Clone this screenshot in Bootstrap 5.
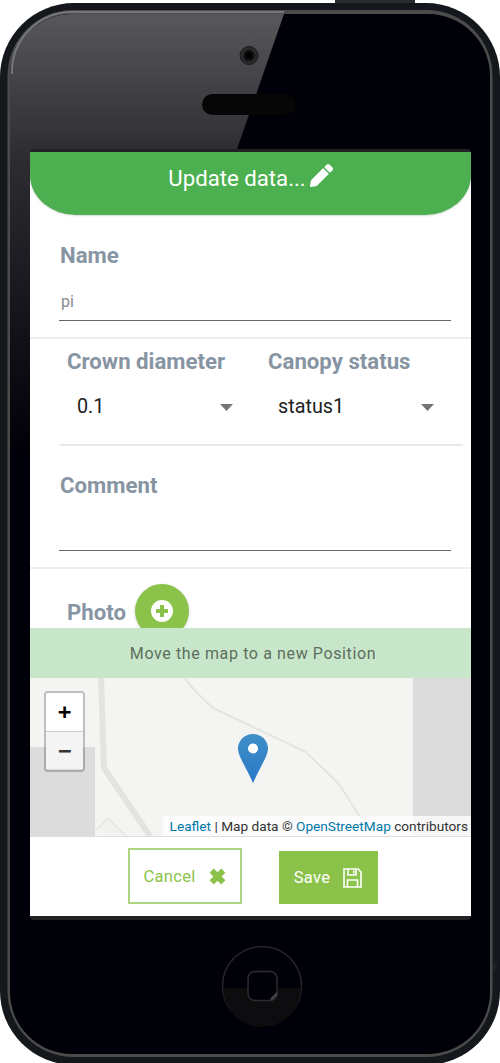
<!DOCTYPE html>
<html lang="en">
<head>
<meta charset="utf-8">
<title>Update data</title>
<link rel="stylesheet" href="https://cdn.jsdelivr.net/npm/bootstrap@5.3.0/dist/css/bootstrap.min.css">
<style>
html,body{margin:0;background:#fff;}
body{font-family:Roboto,"Liberation Sans",sans-serif;}
.phone-wrap{position:relative;width:500px;height:1063px;overflow:hidden;padding:152px 29px 0 30px;}
.phone-art{position:absolute;left:0;top:0;}
.screen-box{position:relative;width:441px;height:764px;background:#fff;display:flex;flex-direction:column;overflow:hidden;}
.head-bar{height:63px;background:#4caf50;color:#fff;border-radius:0 0 46px 46px/0 0 40px 40px;font-size:22.2px;line-height:53px;box-shadow:0 1px 2px rgba(0,0,0,.15);flex:none;}
.head-bar svg{width:23px;height:23px;margin-left:4px;vertical-align:-1px;margin-top:-6px;}
.fld-label{font-size:22.2px;font-weight:700;color:#8795a3;line-height:26px;margin:0;}
.sect-name{height:124px;padding:27px 20px 0 29px;border-bottom:2px solid #eee;flex:none;}
.sect-name .fld-label{margin-left:1px;}
.line-input.form-control{border:0;border-bottom:1px solid #666;border-radius:0;padding:0 2px;height:39px;font-size:16px;color:#8a8a8a;background:transparent;box-shadow:none;margin-top:14px;width:392px;font-family:inherit;}
.sect-sel{height:105px;flex:none;padding:9px 8px 0 37px;}
.sect-sel .row{--bs-gutter-x:0;width:396px;}
.sect-sel .col-6:first-child{width:201px;flex:none;}
.sect-sel .col-6:last-child{width:195px;flex:none;}
.pick.form-select{border:0;border-radius:0;background-color:transparent;background-position:right 4px center;background-size:13px 7px;background-image:url("data:image/svg+xml,%3Csvg xmlns='http://www.w3.org/2000/svg' viewBox='0 0 13 7'%3E%3Cpath fill='%23757575' d='M0 0h13L6.500 7z'/%3E%3C/svg%3E");padding:0 0 0 10px;height:36px;font-size:19.8px;color:#212121;margin-top:15px;box-shadow:none;font-family:inherit;width:170px;}
.sect-sel .col-6:first-child .pick{width:170px;}
.sect-cmt{flex:none;height:125px;padding:26px 20px 0 29px;border-top:2px solid #e8e8e8;margin-left:0;position:relative;border-bottom:2px solid #eee;}
.cmt-rule{position:absolute;left:0;top:-2px;width:30px;height:2px;background:#fff;}
.cmt-rule-r{position:absolute;right:0;top:-2px;width:8px;height:2px;background:#fff;}
.sect-cmt .fld-label{margin-left:1px;}
.cmt-line{height:40px;border-bottom:1px solid #666;margin-top:13px;width:392px;}
.sect-photo{height:59px;flex:none;overflow:hidden;padding:15px 0 0 37px;display:flex;align-items:flex-start;gap:9px;}
.sect-photo .fld-label{margin-top:15px;}
.add-photo.btn{width:54px;height:54px;padding:0;border:0;border-radius:50%;background:#8bc34a;display:flex;align-items:center;justify-content:center;box-shadow:0 1px 3px rgba(0,0,0,.2);flex:none;}
.add-photo svg{width:22px;height:22px;}
.hint-bar{height:50px;flex:none;background:#c8e6c9;color:#5d6e5e;font-size:16px;line-height:52px;letter-spacing:.62px;padding-left:5px;}
.map-area{position:relative;height:158px;flex:none;background:#f4f4f2;overflow:hidden;}
.map-art{position:absolute;left:0;top:0;}
.zoom-box{position:absolute;left:14px;top:13px;width:41px;height:81px;border:2px solid rgba(0,0,0,.22);border-radius:4px;background-clip:padding-box;overflow:hidden;}
.zoom-key{height:38px;display:flex;align-items:center;justify-content:center;background:#fff;font:700 22px/1 "DejaVu Sans Mono","Liberation Mono",monospace;color:#000;text-decoration:none;}
.zoom-key+.zoom-key{background:#f4f4f4;border-top:1px solid #ccc;color:#333;}
.pin-mark{position:absolute;left:207px;top:55px;}
.attrib{position:absolute;right:0;bottom:0;background:rgba(255,255,255,.75);font-size:13.65px;line-height:20px;padding:0 3px 0 7px;color:#333;white-space:nowrap;}
.attrib a{color:#0078a8;text-decoration:none;}
.foot-bar{flex:1;border-top:1px solid #ddd;position:relative;display:flex;justify-content:center;align-items:flex-start;padding:11px 0 0 4px;}
.act-cancel.btn{width:114px;height:56px;border:2px solid #aed581;border-radius:0;background:#fff;color:#8bc34a;font-size:16.5px;padding:2px 0 0;letter-spacing:.3px;display:flex;align-items:center;justify-content:center;gap:13px;}
.act-cancel svg{margin-top:-2px;}
.act-save.btn{width:99px;height:53px;margin:3px 0 0 37px;border:0;border-radius:0;background:#8bc34a;color:#fff;font-size:16.5px;padding:2px 0 0;letter-spacing:.3px;display:flex;align-items:center;justify-content:center;gap:13px;}
.act-save svg{margin-top:-2px;}
</style>
</head>
<body>
<div class="phone-wrap">
<svg class="phone-art" width="500" height="1063" viewBox="0 0 500 1063" aria-hidden="true">
<defs>
<linearGradient id="glareFill" x1="0" y1="0" x2="0" y2="1"><stop offset="0" stop-color="#59585b"/><stop offset="1" stop-color="#2e2d32"/></linearGradient>
<linearGradient id="sideFill" x1="0" y1="0" x2="0" y2="1"><stop offset="0" stop-color="#2e2d32"/><stop offset="1" stop-color="#000008"/></linearGradient>
<clipPath id="innerClip"><rect x="10" y="14" width="480" height="1040" rx="62"/></clipPath>
</defs>
<rect x="335" y="0" width="80" height="6" fill="#2b2b2e"/>
<rect x="0" y="3" width="500" height="1062" rx="74" fill="#14181c"/>
<rect x="7.500" y="10" width="485" height="1047" rx="66" fill="#4b4b4b"/>
<rect x="10" y="14" width="480" height="1040" rx="62" fill="#000008"/>
<polygon clip-path="url(#innerClip)" points="0,10 284,14 236,152 0,152" fill="url(#glareFill)"/>
<rect clip-path="url(#innerClip)" x="0" y="152" width="30" height="300" fill="url(#sideFill)"/>
<path d="M12 74A60 60 0 0 1 72 12H284" fill="none" stroke="#77777a" stroke-width="2"/>
<rect x="30" y="149" width="441" height="771" rx="4" fill="#222224"/>
<circle cx="249" cy="55.500" r="9" fill="#2a2a2c" stroke="#19191b" stroke-width="1"/>
<circle cx="249" cy="55.500" r="5.500" fill="#0e0e10"/>
<circle cx="249" cy="55.500" r="3" fill="#000"/>
<rect x="202" y="94" width="94" height="21" rx="10.500" fill="#060606"/>
<circle cx="262" cy="986" r="39.500" fill="#000008" stroke="#262628" stroke-width="1.500"/>
<path d="M223 988H301A39 39 0 0 1 223 988Z" fill="#0d0d0f"/>
<rect x="248" y="971.500" width="29" height="29" rx="7" fill="#000008" stroke="#2c2c2e" stroke-width="1.500"/>
<path d="M272 1000L277 995V992L270 999Z" fill="#4a4a4c"/>
<rect x="493" y="963" width="4" height="8" fill="#1c2024"/>
</svg>
<div class="screen-box">
  <div class="head-bar text-center">Update data...<svg viewBox="0 0 512 512"><path fill="#fff" d="M497.900 142.100l-46.100 46.100c-4.700 4.700-12.300 4.700-17 0l-111-111c-4.700-4.700-4.700-12.300 0-17l46.100-46.100c18.700-18.700 49.100-18.700 67.900 0l60.100 60.100c18.800 18.700 18.800 49.100 0 67.900zM284.200 99.800L21.600 362.400.4 483.900c-2.900 16.400 11.400 30.600 27.800 27.800l121.500-21.300 262.600-262.600c4.700-4.700 4.700-12.300 0-17l-111-111c-4.800-4.700-12.400-4.700-17.100 0z"/></svg></div>
  <div class="sect-name">
    <p class="fld-label">Name</p>
    <input class="form-control line-input" type="text" value="pi">
  </div>
  <div class="sect-sel">
    <div class="row">
      <div class="col-6"><p class="fld-label">Crown diameter</p><select class="form-select pick"><option>0.1</option></select></div>
      <div class="col-6"><p class="fld-label">Canopy status</p><select class="form-select pick"><option>status1</option></select></div>
    </div>
  </div>
  <div class="sect-cmt">
    <span class="cmt-rule"></span><span class="cmt-rule-r"></span>
    <p class="fld-label">Comment</p>
    <div class="cmt-line"></div>
  </div>
  <div class="sect-photo">
    <p class="fld-label">Photo</p>
    <button class="btn add-photo" type="button" aria-label="Add photo"><svg viewBox="0 0 22 22"><circle cx="11" cy="11" r="11" fill="#fff"/><path d="M11 5v12M5 11h12" stroke="#8bc34a" stroke-width="4"/></svg></button>
  </div>
  <div class="hint-bar text-center">Move the map to a new Position</div>
  <div class="map-area">
    <svg class="map-art" width="441" height="158" viewBox="0 0 441 158" aria-hidden="true">
      <rect x="0" y="69" width="65" height="89" fill="#dcdcdc"/>
      <rect x="383" y="0" width="58" height="158" fill="#dcdcdc"/>
      <path d="M66 152L78 140L96 158" fill="#f1f1ee" stroke="#e6e6e2" stroke-width="1.500"/>
      <path d="M71 0L74 90L120 158" fill="none" stroke="#e3e3e1" stroke-width="6"/>
      <path d="M155 0Q160 9 183 30L276 74L309 106L332 142" fill="none" stroke="#e4e4e2" stroke-width="2"/>
    </svg>
    <div class="zoom-box"><a class="zoom-key" href="#">+</a><a class="zoom-key" href="#">−</a></div>
    <svg class="pin-mark" width="32" height="52" viewBox="0 0 32 52" aria-hidden="true">
      <defs><linearGradient id="pinFill" x1="0" y1="0" x2="0" y2="1"><stop offset="0" stop-color="#3f8fc8"/><stop offset="1" stop-color="#2a78c8"/></linearGradient></defs>
      <path d="M16 1C7.500 1 1 7.600 1 15.500C1 23 9.500 35 16 50C22.500 35 31 23 31 15.500C31 7.600 24.500 1 16 1Z" fill="url(#pinFill)"/>
      <circle cx="16" cy="15.500" r="5" fill="#fff"/>
    </svg>
    <div class="attrib"><a href="#">Leaflet</a> | Map data © <a href="#">OpenStreetMap</a> contributors</div>
  </div>
  <div class="foot-bar">
    <button class="btn act-cancel" type="button">Cancel <svg width="17" height="17" viewBox="0 0 16 16"><path d="M2.500 2.500L13.500 13.500M13.500 2.500L2.500 13.500" stroke="#8bc34a" stroke-width="5.500"/></svg></button>
    <button class="btn act-save" type="button">Save <svg width="19" height="20" viewBox="0 0 19 20"><path fill="none" stroke="#fff" stroke-width="1.600" d="M1 1H15L18 4V19H1ZM5 1V7H13V1M4.500 19V12H14.500V19"/><path stroke="#fff" stroke-width="1.600" d="M10.800 2.500V5.500"/></svg></button>
  </div>
</div>
</div>
<script src="https://cdn.jsdelivr.net/npm/bootstrap@5.3.0/dist/js/bootstrap.bundle.min.js"></script>
</body>
</html>
